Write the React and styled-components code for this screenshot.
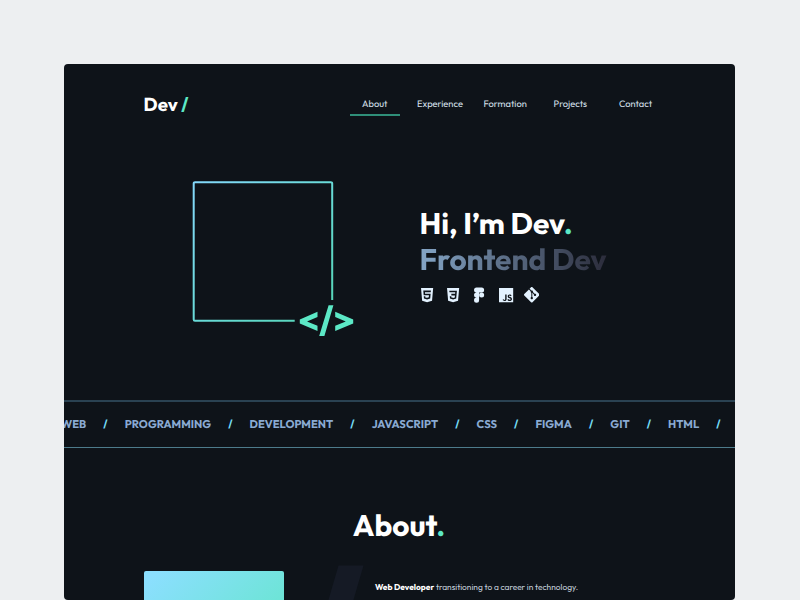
import React from 'react';
import styled, { createGlobalStyle } from 'styled-components';
import { IoLogoHtml5, IoLogoCss3, IoLogoFigma, IoLogoJavascript } from 'react-icons/io5';
import { SiGit } from 'react-icons/si';

const GlobalStyle = createGlobalStyle`
  * { box-sizing: border-box; }
  body {
    margin: 0;
    background: #edeff1;
    font-family: Outfit, Lato, sans-serif;
    color: #fff;
    text-rendering: geometricPrecision;
  }
`;

const Page = styled.div`
  height: 600px;
  padding: 64px 65px 0 64px;
  overflow: hidden;
`;

const Frame = styled.main`
  height: 536px;
  display: flex;
  flex-direction: column;
  background: #0e1319;
  border-radius: 4px;
  overflow: hidden;
`;

const Header = styled.header`
  flex: none;
  height: 81px;
  padding: 26px 74.5px 0 79.6px;
  display: flex;
  justify-content: space-between;
  align-items: flex-start;
`;

const Logo = styled.div`
  font-size: 18.64px;
  line-height: 28px;
  font-weight: 700;
`;

const Accent = styled.span`
  color: #5ce8c6;
`;

const Nav = styled.nav`
  display: flex;
  gap: 15.2px;
`;

const NavItem = styled.a`
  width: 50px;
  height: 26px;
  display: flex;
  justify-content: center;
  font-size: 9.32px;
  line-height: 30px;
  font-weight: 400;
  color: #d6e0ed;
  border-bottom: 2px solid ${(p) => (p.$active ? '#2f8f79' : 'transparent')};
`;

const Hero = styled.section`
  flex: none;
  height: 255px;
  padding: 36px 0 0 128px;
  display: flex;
`;

const Portrait = styled.svg`
  flex: none;
  width: 164px;
  height: 160px;
`;

const Intro = styled.div`
  padding: 24px 0 0 63.5px;
`;

const HeroTitle = styled.h1`
  margin: 0;
  font-size: 29.83px;
  line-height: 36px;
  font-weight: 700;
`;

const HeroRole = styled.div`
  width: max-content;
  font-size: 29.83px;
  line-height: 36px;
  font-weight: 700;
  color: transparent;
  background: linear-gradient(90deg, #84a5c6, #2b2c3b);
  background-clip: text;
`;

const Skills = styled.div`
  display: flex;
  gap: 10px;
  margin: 10px 0 0 -0.5px;
  color: #e3f2ff;
  font-size: 16.2px;
`;

const Ticker = styled.div`
  flex: none;
  height: 48px;
  padding-bottom: 2px;
  display: flex;
  align-items: center;
  gap: 17.12px;
  border-top: 2px solid #2a4252;
  border-bottom: 1px solid #4d7b8b;
  font-size: 11.18px;
  font-weight: 700;
  white-space: nowrap;
  color: #8aaad2;
`;

const TickerWord = styled.span`
  &:first-child {
    margin-left: -3px;
  }
`;

const TickerSlash = styled.span`
  color: #75dcf4;
`;

const AboutTitle = styled.h2`
  flex: none;
  margin: 57px 0 0;
  padding-right: 1px;
  text-align: center;
  font-size: 29.83px;
  line-height: 40px;
  font-weight: 700;
`;

const AboutBody = styled.section`
  flex: none;
  display: flex;
  padding: 20px 0 0 80px;
`;

const Photo = styled.div`
  width: 139.5px;
  height: 139.5px;
  margin-top: 6px;
  border-radius: 2px;
  background: linear-gradient(135deg, #8bdffe 5%, #62e6c8 80%);
`;

const SlashMark = styled.svg`
  width: 46px;
  height: 60px;
  margin-left: 40.5px;
`;

const Bio = styled.p`
  margin: 17px 0 0 5px;
  font-size: 8.39px;
  line-height: 13px;
  font-weight: 400;
  color: #c5d0dc;
  white-space: nowrap;

  strong {
    font-weight: 700;
    color: #fff;
  }
`;

const links = ['About', 'Experience', 'Formation', 'Projects', 'Contact'];
const words = ['WEB', 'PROGRAMMING', 'DEVELOPMENT', 'JAVASCRIPT', 'CSS', 'FIGMA', 'GIT', 'HTML'];

export default function App() {
  return (
    <Page>
      <GlobalStyle />
      <Frame>
        <Header>
          <Logo>
            Dev <Accent>/</Accent>
          </Logo>
          <Nav>
            {links.map((l, i) => (
              <NavItem key={l} $active={i === 0}>{l}</NavItem>
            ))}
          </Nav>
        </Header>
        <Hero>
          <Portrait viewBox="192 181 164 160" fill="none">
            <defs>
              <linearGradient id="edge" gradientUnits="userSpaceOnUse" x1="193" y1="182" x2="333" y2="321">
                <stop offset="0" stopColor="#84d8fb" />
                <stop offset="0.5" stopColor="#69dbd8" />
                <stop offset="1" stopColor="#54d4b4" />
              </linearGradient>
            </defs>
            <path
              d="M332.2 300V183.5a1.3 1.3 0 0 0-1.3-1.3H195a1.3 1.3 0 0 0-1.3 1.3V319.5a1.3 1.3 0 0 0 1.3 1.3H294.7"
              stroke="url(#edge)"
              strokeWidth="2"
            />
            <path
              d="M317.5 311.8L299.8 319.4V323.5L317.5 331V325.7L307 321.4L317.5 317.1ZM328.6 305.3H333.4L324.4 336H319.2ZM335.2 311.8L353.2 319.4V323.5L335.2 331V325.7L345.8 321.4L335.2 317.1Z"
              fill="#5ce8c6"
            />
          </Portrait>
          <Intro>
            <HeroTitle>
              Hi, I’m Dev<Accent>.</Accent>
            </HeroTitle>
            <HeroRole>Frontend Dev</HeroRole>
            <Skills>
              <IoLogoHtml5 />
              <IoLogoCss3 />
              <IoLogoFigma />
              <IoLogoJavascript />
              <SiGit size={15.5} />
            </Skills>
          </Intro>
        </Hero>
        <Ticker>
          {words.map((w) => (
            <React.Fragment key={w}>
              <TickerWord>{w}</TickerWord>
              <TickerSlash>/</TickerSlash>
            </React.Fragment>
          ))}
        </Ticker>
        <AboutTitle>
          About<Accent>.</Accent>
        </AboutTitle>
        <AboutBody>
          <Photo />
          <SlashMark viewBox="324 565 46 60">
            <path d="M338.5 565.5H363.5L346 625.5H321Z" fill="#151a25" />
          </SlashMark>
          <Bio>
            <strong>Web Developer</strong> transitioning to a career in technology.
          </Bio>
        </AboutBody>
      </Frame>
    </Page>
  );
}
